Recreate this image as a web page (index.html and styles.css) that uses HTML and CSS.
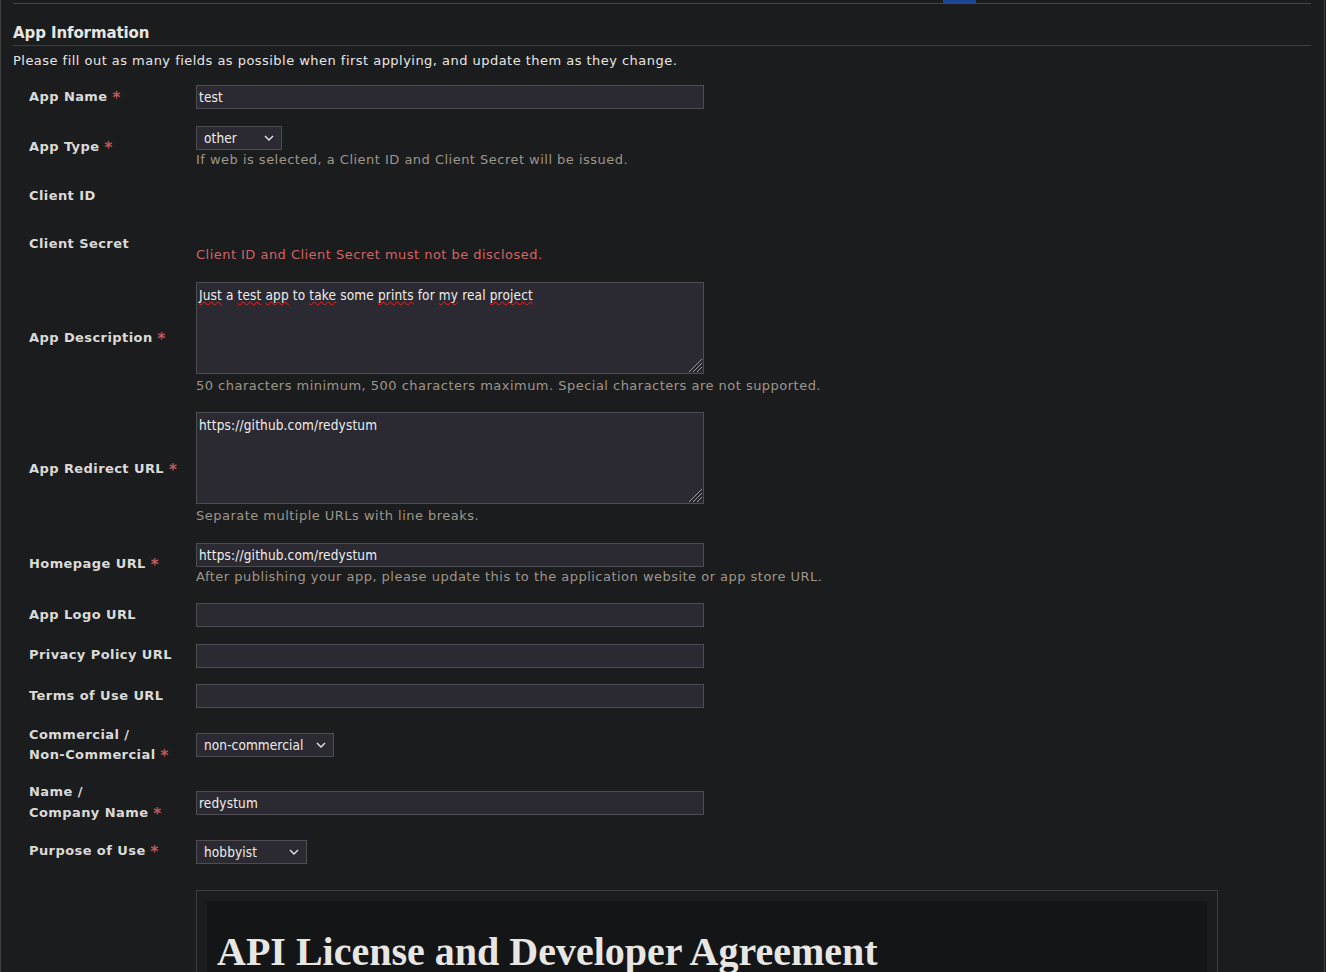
FILE: index.html
```html
<!DOCTYPE html>
<html lang="en">
<head>
<meta charset="utf-8">
<title>App Information</title>
<link rel="stylesheet" href="styles.css">
</head>
<body>
<div class="page">
  <div class="tabbar"><span class="tab-active"></span></div>
  <h2 class="section-title">App Information</h2>
  <p class="intro">Please fill out as many fields as possible when first applying, and update them as they change.</p>

  <div class="form">
    <div class="label">App Name <span class="req">*</span></div>
    <div class="value"><input class="field" type="text" value="test"></div>

    <div class="label">App Type <span class="req">*</span></div>
    <div class="value">
      <span class="select select-sm"><select><option>other</option></select><svg class="chev" width="10" height="6" viewBox="0 0 10 6"><polyline points="1,1 5,5 9,1" fill="none" stroke="#e8e6e3" stroke-width="1.4"/></svg></span>
      <div class="help">If web is selected, a Client ID and Client Secret will be issued.</div>
    </div>

    <div class="label">Client ID</div>
    <div class="value"></div>

    <div class="label">Client Secret</div>
    <div class="value">
      <div class="secret-value"></div>
      <div class="warn">Client ID and Client Secret must not be disclosed.</div>
    </div>

    <div class="label">App Description <span class="req">*</span></div>
    <div class="value">
      <div class="textarea"><span class="sp">Just</span> a <span class="sp">test</span> <span class="sp">app</span> to <span class="sp">take</span> some <span class="sp">prints</span> for <span class="sp">my</span> real <span class="sp">project</span><svg class="grip" width="16" height="16" viewBox="0 0 16 16"><path d="M15 2 L2 15 M15 6 L6 15 M15 10 L10 15" stroke="#9a9aa0" stroke-width="1"/><path d="M15 4 L4 15 M15 8 L8 15 M15 12 L12 15" stroke="#1e1e24" stroke-width="1"/></svg></div>
      <div class="help help-after-area">50 characters minimum, 500 characters maximum. Special characters are not supported.</div>
    </div>

    <div class="label">App Redirect URL <span class="req">*</span></div>
    <div class="value">
      <div class="textarea">https://github.com/redystum<svg class="grip" width="16" height="16" viewBox="0 0 16 16"><path d="M15 2 L2 15 M15 6 L6 15 M15 10 L10 15" stroke="#9a9aa0" stroke-width="1"/><path d="M15 4 L4 15 M15 8 L8 15 M15 12 L12 15" stroke="#1e1e24" stroke-width="1"/></svg></div>
      <div class="help help-after-area">Separate multiple URLs with line breaks.</div>
    </div>

    <div class="label">Homepage URL <span class="req">*</span></div>
    <div class="value">
      <input class="field" type="text" value="https://github.com/redystum">
      <div class="help">After publishing your app, please update this to the application website or app store URL.</div>
    </div>

    <div class="label">App Logo URL</div>
    <div class="value"><input class="field" type="text" value=""></div>

    <div class="label">Privacy Policy URL</div>
    <div class="value"><input class="field" type="text" value=""></div>

    <div class="label">Terms of Use URL</div>
    <div class="value"><input class="field" type="text" value=""></div>

    <div class="label">Commercial /<br>Non-Commercial <span class="req">*</span></div>
    <div class="value">
      <span class="select select-lg"><select><option>non-commercial</option></select><svg class="chev" width="10" height="6" viewBox="0 0 10 6"><polyline points="1,1 5,5 9,1" fill="none" stroke="#e8e6e3" stroke-width="1.4"/></svg></span>
    </div>

    <div class="label">Name /<br>Company Name <span class="req">*</span></div>
    <div class="value"><input class="field" type="text" value="redystum"></div>

    <div class="label">Purpose of Use <span class="req">*</span></div>
    <div class="value">
      <span class="select select-md"><select><option>hobbyist</option></select><svg class="chev" width="10" height="6" viewBox="0 0 10 6"><polyline points="1,1 5,5 9,1" fill="none" stroke="#e8e6e3" stroke-width="1.4"/></svg></span>
    </div>

    <div class="license">
      <div class="license-inner">
        <h1 class="license-title">API License and Developer Agreement</h1>
      </div>
    </div>
  </div>
</div>
</body>
</html>
```

FILE: styles.css
```css
html, body {
  margin: 0;
  padding: 0;
  background: #1b1c1e;
}

body {
  font-family: "DejaVu Sans", Verdana, sans-serif;
  font-size: 13px;
  color: #e8e6e3;
  overflow: hidden;
}

.page {
  box-sizing: border-box;
  width: 1325px;
  min-height: 972px;
  border-left: 1px solid #3c3e40;
  border-right: 1px solid #3c3e40;
  padding: 0 13px 0 12px;
}

.tabbar {
  display: flex;
  height: 3px;
  border-bottom: 1px solid #234a86;
}

.tab-active {
  display: block;
  margin-left: 930px;
  width: 33px;
  height: 3px;
  background: #1f4595;
}

.section-title {
  margin: 19px 0 0;
  padding: 1px 0 3px;
  font-size: 15px;
  line-height: 18px;
  font-weight: bold;
  letter-spacing: -0.1px;
  color: #e8e6e3;
  border-bottom: 1px solid #3d4043;
}

.intro {
  margin: 5px 0 0;
  line-height: 20px;
  letter-spacing: 0.47px;
}

.form {
  display: grid;
  grid-template-columns: 183px 1fr;
  row-gap: 16.5px;
  align-items: center;
  margin-top: 14px;
}

.label {
  padding-left: 16px;
  font-weight: bold;
  line-height: 20.5px;
  color: #dcdad6;
  letter-spacing: 0.42px;
}

.req {
  line-height: 0;
  vertical-align: -2px;
  color: #c35a5a;
  font-size: 15px;
  letter-spacing: 0;
}

.value {
  display: flex;
  flex-direction: column;
  align-items: flex-start;
  min-height: 20.5px;
}

.field {
  box-sizing: border-box;
  width: 508px;
  height: 24px;
  margin: 0;
  padding: 0 2px;
  border: 1px solid #4c4c52;
  background: #2b2a33;
  color: #f0eeea;
  font-family: "DejaVu Sans Condensed", "DejaVu Sans", sans-serif;
  font-size: 13.5px;
  letter-spacing: 0.15px;
  outline: none;
}

.select {
  position: relative;
  display: inline-flex;
}

.select select {
  appearance: none;
  -webkit-appearance: none;
  box-sizing: border-box;
  height: 24px;
  margin: 0;
  padding: 0 24px 0 7px;
  border: 1px solid #4c4c52;
  border-radius: 0;
  background: #2b2a33;
  color: #f0eeea;
  font-family: "DejaVu Sans Condensed", "DejaVu Sans", sans-serif;
  font-size: 13.5px;
  letter-spacing: 0.1px;
  outline: none;
}

.select-sm select { width: 86px; }
.select-md select { width: 111px; }
.select-lg select { width: 138px; }

.chev {
  position: absolute;
  right: 8px;
  top: 9px;
  pointer-events: none;
}

.help {
  line-height: 20px;
  color: #9e9689;
  letter-spacing: 0.48px;
}

.help-after-area {
  margin-top: 2px;
}

.secret-value {
  height: 21px;
}

.warn {
  line-height: 21px;
  color: #cf6563;
  letter-spacing: 0.47px;
}

.textarea {
  position: relative;
  box-sizing: border-box;
  width: 508px;
  height: 92px;
  padding: 2px 2px;
  border: 1px solid #4c4c52;
  background: #2b2a33;
  color: #f0eeea;
  font-family: "DejaVu Sans Condensed", "DejaVu Sans", sans-serif;
  font-size: 13.5px;
  letter-spacing: 0.15px;
  line-height: 20px;
}

.sp {
  text-decoration: underline wavy #ff1a1a;
  text-decoration-thickness: 1px;
  text-underline-offset: 1px;
  text-decoration-skip-ink: none;
}

.grip {
  position: absolute;
  right: 0;
  bottom: 0;
}

.license {
  grid-column: 2;
  box-sizing: border-box;
  width: 1022px;
  margin-top: 10px;
  padding: 10px;
  border: 1px solid #3b3d3f;
  align-self: start;
}

.license-inner {
  background: #141517;
  padding: 1px 10px;
  min-height: 200px;
}

.license-title {
  margin: 26px 0;
  font-family: "Liberation Serif", "Times New Roman", serif;
  font-size: 40px;
  font-weight: bold;
  color: #e8e6e3;
}
```
